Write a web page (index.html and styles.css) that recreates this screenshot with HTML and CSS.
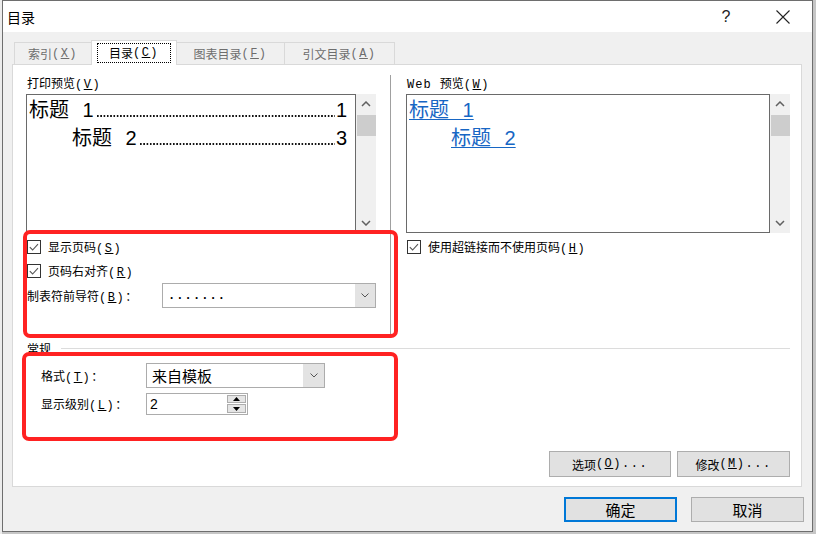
FILE: index.html
```html
<!DOCTYPE html>
<html lang="zh-CN">
<head>
<meta charset="utf-8">
<title>目录</title>
<link rel="stylesheet" href="styles.css">
</head>
<body>
<div class="window">
  <div class="titlebar">
    <span class="title">目录</span>
    <span class="help">?</span>
    <span class="close"><svg width="14" height="14" viewBox="0 0 14 14"><path d="M0.5 0.5 L13.5 13.5 M13.5 0.5 L0.5 13.5" stroke="#222" stroke-width="1.1" fill="none"/></svg></span>
  </div>
  <div class="content">
    <div class="tabs">
      <div class="tab t1">索引<span class="a">(<u>X</u>)</span></div>
      <div class="tab t2 sel"><span class="focus">目录<span class="a">(<u>C</u>)</span></span></div>
      <div class="tab t3">图表目录<span class="a">(<u>F</u>)</span></div>
      <div class="tab t4">引文目录<span class="a">(<u>A</u>)</span></div>
    </div>
    <div class="panel">
      <div class="previews">
        <div class="col-l">
          <div class="label">打印预览<span class="a">(<u>V</u>)</span></div>
          <div class="preview">
            <div class="pv">
              <div class="tl"><span>标题 1</span><span class="leader"></span><span>1</span></div>
              <div class="tl l2"><span>标题 2</span><span class="leader"></span><span>3</span></div>
            </div>
            <div class="sb">
              <div class="sb-btn"><svg width="10" height="6" viewBox="0 0 10 6"><path d="M1 5 L5 1 L9 5" stroke="#606060" stroke-width="1.5" fill="none"/></svg></div>
              <div class="thumb"></div>
              <div class="sb-fill"></div>
              <div class="sb-btn"><svg width="10" height="6" viewBox="0 0 10 6"><path d="M1 1 L5 5 L9 1" stroke="#606060" stroke-width="1.5" fill="none"/></svg></div>
            </div>
          </div>
          <div class="check c1">
            <svg class="cb" width="14" height="14" viewBox="0 0 14 14"><rect x="0.5" y="0.5" width="13" height="13" fill="#fff" stroke="#333"/><path d="M2.8 7.2 L5.6 10 L11 4.2" fill="none" stroke="#555" stroke-width="1.1"/></svg>
            <span>显示页码<span class="a">(<u>S</u>)</span></span>
          </div>
          <div class="check c2">
            <svg class="cb" width="14" height="14" viewBox="0 0 14 14"><rect x="0.5" y="0.5" width="13" height="13" fill="#fff" stroke="#333"/><path d="M2.8 7.2 L5.6 10 L11 4.2" fill="none" stroke="#555" stroke-width="1.1"/></svg>
            <span>页码右对齐<span class="a">(<u>R</u>)</span></span>
          </div>
          <div class="lead-row">
            <span>制表符前导符<span class="a">(<u>B</u>)</span>：</span>
            <div class="select sel-lead">
              <span class="val dots">.......</span>
              <span class="arr"><svg width="8" height="5" viewBox="0 0 8 5"><path d="M0.5 0.5 L4 4 L7.5 0.5" stroke="#555" stroke-width="1" fill="none"/></svg></span>
            </div>
          </div>
        </div>
        <div class="sep"></div>
        <div class="col-r">
          <div class="label"><span class="a web">Web </span>预览<span class="a">(<u>W</u>)</span></div>
          <div class="preview">
            <div class="pv">
              <div class="tl"><a class="link">标题 1</a></div>
              <div class="tl l2r"><a class="link">标题 2</a></div>
            </div>
            <div class="sb">
              <div class="sb-btn"><svg width="10" height="6" viewBox="0 0 10 6"><path d="M1 5 L5 1 L9 5" stroke="#606060" stroke-width="1.5" fill="none"/></svg></div>
              <div class="thumb"></div>
              <div class="sb-fill"></div>
              <div class="sb-btn"><svg width="10" height="6" viewBox="0 0 10 6"><path d="M1 1 L5 5 L9 1" stroke="#606060" stroke-width="1.5" fill="none"/></svg></div>
            </div>
          </div>
          <div class="check c1">
            <svg class="cb" width="14" height="14" viewBox="0 0 14 14"><rect x="0.5" y="0.5" width="13" height="13" fill="#fff" stroke="#333"/><path d="M2.8 7.2 L5.6 10 L11 4.2" fill="none" stroke="#555" stroke-width="1.1"/></svg>
            <span>使用超链接而不使用页码<span class="a">(<u>H</u>)</span></span>
          </div>
        </div>
      </div>
      <div class="gen-head"><span>常规</span><span class="hr"></span></div>
      <div class="frow f1">
        <span class="fl">格式<span class="a">(<u>T</u>)</span>：</span>
        <div class="select sel-fmt">
          <span class="val big">来自模板</span>
          <span class="arr"><svg width="8" height="5" viewBox="0 0 8 5"><path d="M0.5 0.5 L4 4 L7.5 0.5" stroke="#555" stroke-width="1" fill="none"/></svg></span>
        </div>
      </div>
      <div class="frow f2">
        <span class="fl">显示级别<span class="a">(<u>L</u>)</span>：</span>
        <div class="spin">
          <span class="val num">2</span>
          <span class="spin-btns">
            <span class="sbtn up"><svg width="7" height="4" viewBox="0 0 7 4"><path d="M0 4 L3.5 0 L7 4 Z" fill="#000"/></svg></span>
            <span class="sbtn down"><svg width="7" height="4" viewBox="0 0 7 4"><path d="M0 0 L3.5 4 L7 0 Z" fill="#000"/></svg></span>
          </span>
        </div>
      </div>
      <div class="pbtns">
        <div class="btn b-opt">选项<span class="a">(<u>O</u>)...</span></div>
        <div class="btn b-mod">修改<span class="a">(<u>M</u>)...</span></div>
      </div>
    </div>
    <div class="footer">
      <div class="btn big-btn def">确定</div>
      <div class="btn big-btn">取消</div>
    </div>
  </div>
  <div class="redbox r1"></div>
  <div class="redbox r2"></div>
</div>
</body>
</html>
```

FILE: styles.css
```css
* { box-sizing: border-box; }
html, body { margin: 0; padding: 0; }
body {
  width: 816px;
  height: 534px;
  overflow: hidden;
  background: linear-gradient(90deg, #ececec 0 2px, #c6c6c6 2px);
  font-family: "Noto Sans CJK SC", sans-serif;
  font-size: 12px;
  color: #000;
}
.a {
  font-family: "Liberation Mono", monospace;
  letter-spacing: 1.5px;
}
.web { letter-spacing: 1px; }
u { text-underline-offset: 1px; }

.window {
  position: relative;
  margin-left: 2px;
  width: 811px;
  height: 532px;
  border: 1px solid #6e6e6e;
  background: #f0f0f0;
  display: flex;
  flex-direction: column;
}
.titlebar {
  height: 31px;
  flex: none;
  background: #fff;
  display: flex;
  align-items: center;
  padding-left: 4px;
}
.title { flex: 1; font-size: 14px; line-height: 20px; }
.help {
  width: 20px;
  text-align: center;
  font-family: "Liberation Sans", sans-serif;
  font-size: 16px;
  line-height: 20px;
  color: #222;
  margin-right: 37px;
}
.close { width: 20px; display: flex; justify-content: center; margin-right: 19px; }

.content { flex: 1; padding: 8px 10px 0 9px; }

.tabs {
  display: flex;
  align-items: flex-end;
  height: 24px;
  padding-left: 2px;
  position: relative;
  z-index: 1;
}
.tab {
  height: 22px;
  border: 1px solid #d9d9d9;
  border-bottom: none;
  background: #f0f0f0;
  color: #6d6d6d;
  display: flex;
  align-items: center;
  justify-content: center;
  margin-left: -1px;
  line-height: 16px;
}
.tab:first-child { margin-left: 0; }
.tab.sel { height: 25px; margin-bottom: -1px; background: #fff; color: #000; }
.t1 { width: 78px; }
.t2 { width: 86px; }
.t3 { width: 109px; }
.t4 { width: 111px; }
.focus {
  width: 74px;
  height: 20px;
  border: 1px dotted #000;
  display: flex;
  align-items: center;
  justify-content: center;
}

.panel {
  height: 423px;
  background: #fff;
  border: 1px solid #d9d9d9;
  padding: 10px 11px 0 13px;
  display: flex;
  flex-direction: column;
}
.previews { display: flex; align-items: flex-start; }
.col-l { width: 350px; }
.col-r { width: 384px; }
.sep { width: 1px; height: 259px; background: #a0a0a0; margin: 0 15px 0 14px; }
.label { height: 16px; line-height: 16px; margin-bottom: 3px; padding-left: 1px; }

.preview { display: flex; height: 139px; }
.pv {
  flex: 1;
  border: 1px solid #6a6a6a;
  background: #fff;
  padding: 1px 8px 0 2px;
  font-family: "Liberation Sans", "Noto Sans CJK SC", sans-serif;
  font-size: 20px;
}
.tl {
  display: flex;
  align-items: baseline;
  height: 28px;
  line-height: 28px;
  word-spacing: 8px;
  white-space: nowrap;
}
.tl.l2 { padding-left: 43px; }
.tl.l2r { padding-left: 42px; }
.leader {
  flex: 1;
  height: 2px;
  margin: 0 1px 0 3px;
  background-image: linear-gradient(90deg, #111 0 1.5px, transparent 1.5px);
  background-size: 3.3px 2px;
  background-repeat: repeat-x;
}
.link {
  color: #1766c4;
  text-decoration: underline;
  text-decoration-thickness: 1px;
  text-underline-offset: 2px;
}
.sb { width: 20px; background: #f0f0f0; display: flex; flex-direction: column; }
.sb-btn { height: 20px; display: flex; align-items: center; justify-content: center; }
.thumb { height: 21px; margin: 1px 0 0 1px; background: #cdcdcd; }
.sb-fill { flex: 1; }

.check { display: flex; align-items: center; gap: 7px; height: 25px; padding-left: 1px; }
.check.c1 { margin-top: 1px; }
.check.c2 { height: 24px; }
.cb { flex: none; }

.lead-row { display: flex; align-items: center; height: 25px; padding-left: 1px; }
.select {
  display: flex;
  height: 25px;
  border: 1px solid #acacac;
  background: #fff;
}
.select .val { flex: 1; display: flex; align-items: center; padding-left: 5px; }
.select .arr { width: 20px; background: #e3e3e3; display: flex; align-items: center; justify-content: center; }
.sel-lead { margin-left: auto; width: 214px; }
.dots { font-family: "Liberation Mono", monospace; letter-spacing: 1.1px; font-size: 12px; font-weight: bold; }
.sel-fmt { width: 179px; }
.sel-fmt .arr { width: 21px; }
.big { font-size: 15px; }

.gen-head { display: flex; align-items: center; height: 15px; margin-top: 7px; padding-left: 1px; line-height: 15px; }
.gen-head .hr { flex: 1; height: 1px; background: #dcdcdc; margin-left: 10px; }
.frow { display: flex; align-items: center; padding-left: 15px; }
.frow .fl { width: 105px; }
.f1 { margin-top: 7px; height: 25px; }
.f2 { margin-top: 5px; height: 22px; }

.spin {
  width: 102px;
  height: 22px;
  border: 1px solid #acacac;
  background: #fff;
  display: flex;
}
.spin .num {
  flex: 1;
  display: flex;
  align-items: center;
  padding-left: 3px;
  font-family: "Liberation Sans", sans-serif;
  font-size: 14px;
}
.spin-btns { width: 19px; margin-right: 1px; display: flex; flex-direction: column; }
.sbtn {
  border: 1px solid #adadad;
  background: #e5e5e5;
  display: flex;
  align-items: center;
  justify-content: center;
}
.sbtn.up { height: 8px; margin-top: 1px; }
.sbtn.down { height: 9px; margin-top: 1px; }

.pbtns { display: flex; justify-content: flex-end; gap: 6px; margin-top: 36px; }
.btn {
  height: 26px;
  border: 1px solid #adadad;
  background: #e1e1e1;
  display: flex;
  align-items: center;
  justify-content: center;
}
.b-opt { width: 122px; }
.b-mod { width: 113px; }

.footer { display: flex; justify-content: flex-end; gap: 14px; margin-top: 10px; margin-right: -2px; }
.big-btn { width: 113px; height: 25px; font-size: 15px; }
.btn.def { border: 2px solid #0078d7; }

.redbox {
  position: absolute;
  border: 4px solid #ff2222;
  border-radius: 7px;
  pointer-events: none;
}
.r1 { left: 20px; top: 229px; width: 375px; height: 108px; }
.r2 { left: 19px; top: 351px; width: 376px; height: 89px; }
```
